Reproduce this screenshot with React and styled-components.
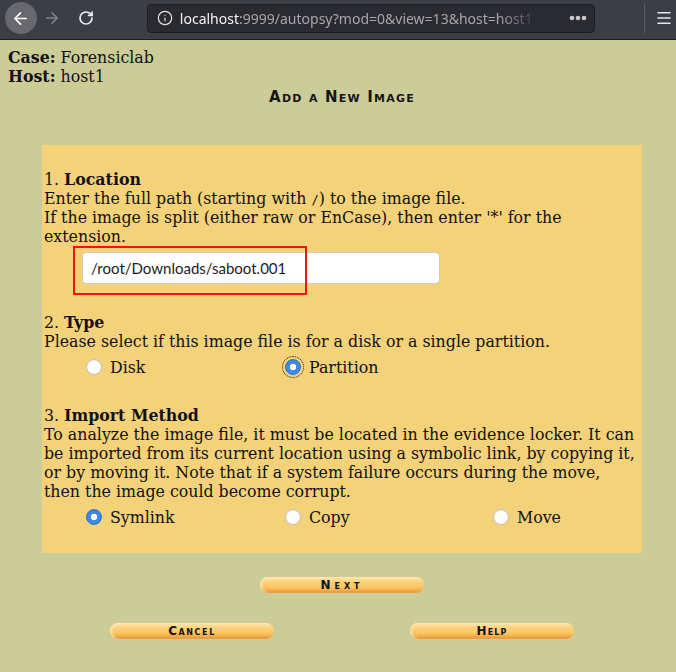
import styled, { createGlobalStyle } from "styled-components";
import { ArrowLeft, ArrowRight, RotateCw, Info, Menu } from "lucide-react";

const GlobalStyle = createGlobalStyle`
  html, body {
    margin: 0;
    padding: 0;
  }
  body {
    background: #cccc99;
    color: #111;
    font-family: "DejaVu Serif", serif;
    font-size: 15.8px;
  }
`;

function Dots() {
  return (
    <svg width="18" height="6" viewBox="0 0 18 6">
      <circle cx="3" cy="3" r="2.3" fill="#c9c9cc" />
      <circle cx="9" cy="3" r="2.3" fill="#c9c9cc" />
      <circle cx="15" cy="3" r="2.3" fill="#c9c9cc" />
    </svg>
  );
}

function App() {
  return (
    <>
      <GlobalStyle />
      <Toolbar>
        <BackButton>
          <ArrowLeft size={19} strokeWidth={2.2} color="#fff" />
        </BackButton>
        <NavButton>
          <ArrowRight size={18} strokeWidth={2} color="#85868b" />
        </NavButton>
        <NavButton $gap={10}>
          <RotateCw size={16} strokeWidth={2.6} color="#ececee" />
        </NavButton>
        <UrlBar>
          <Info size={16} strokeWidth={1.8} color="#e4e4e6" />
          <UrlText>
            <Host>localhost</Host>:9999/autopsy?mod=0&view=13&host=host1
          </UrlText>
          <Dots />
        </UrlBar>
        <Separator />
        <MenuButton>
          <Menu size={18} strokeWidth={2.2} color="#e4e4e6" />
        </MenuButton>
      </Toolbar>

      <Page>
        <Meta>
          <b>Case:</b> Forensiclab
        </Meta>
        <Meta>
          <b>Host:</b> host1
        </Meta>
        <Title>Add a New Image</Title>

        <Panel>
          <Block>
            1. <b>Location</b>
            <br />
            Enter the full path (starting with <Mono>/</Mono>) to the image
            file.
            <br />
            If the image is split (either raw or EnCase), then enter '*' for
            the extension.
          </Block>
          <InputRow>
            <PathInput defaultValue="/root/Downloads/saboot.001" />
            <Highlight />
          </InputRow>

          <Block $gap={29}>
            2. <b>Type</b>
            <br />
            Please select if this image file is for a disk or a single
            partition.
          </Block>
          <RadioRow>
            <Choice>
              <Radio type="radio" name="type" />
              Disk
            </Choice>
            <Choice>
              <Radio type="radio" name="type" defaultChecked $focused />
              Partition
            </Choice>
          </RadioRow>

          <Block $gap={29}>
            3. <b>Import Method</b>
            <br />
            To analyze the image file, it must be located in the evidence
            locker. It can be imported from its current location using a
            symbolic link, by copying it, or by moving it. Note that if a
            system failure occurs during the move, then the image could become
            corrupt.
          </Block>
          <RadioRow>
            <Choice>
              <Radio type="radio" name="method" defaultChecked />
              Symlink
            </Choice>
            <Choice>
              <Radio type="radio" name="method" />
              Copy
            </Choice>
            <Choice>
              <Radio type="radio" name="method" />
              Move
            </Choice>
          </RadioRow>
        </Panel>

        <ButtonRow $gap={24} $cols="1fr">
          <PillButton $spacing={4}>Next</PillButton>
        </ButtonRow>
        <ButtonRow $gap={30} $cols="1fr 1fr">
          <PillButton>Cancel</PillButton>
          <PillButton $spacing={1.1}>Help</PillButton>
        </ButtonRow>
      </Page>
    </>
  );
}

export default App;

const Toolbar = styled.header`
  display: flex;
  align-items: center;
  height: 36px;
  padding-bottom: 3px;
  background: #3b3e45;
  border-bottom: 1px solid #1c1d21;
`;

const BackButton = styled.div`
  display: flex;
  justify-content: center;
  align-items: center;
  width: 32px;
  height: 32px;
  margin-left: 5px;
  border-radius: 50%;
  background: #68696e;
`;

const NavButton = styled.div`
  display: flex;
  justify-content: center;
  align-items: center;
  width: 24px;
  height: 24px;
  margin-left: ${(p) => p.$gap || 3}px;
`;

const UrlBar = styled.div`
  display: flex;
  align-items: center;
  box-sizing: border-box;
  width: 449px;
  height: 29px;
  margin-left: 49px;
  padding: 0 7px 0 9px;
  border: 1px solid #1d1e22;
  border-radius: 4px;
  background: #2a2b31;
`;

const UrlText = styled.div`
  flex: 1;
  margin: 0 28px 0 7px;
  overflow: hidden;
  white-space: nowrap;
  font-family: "Noto Sans", sans-serif;
  font-size: 14px;
  color: #a6a7ac;
  -webkit-mask-image: linear-gradient(to right, #000 88%, transparent);
  mask-image: linear-gradient(to right, #000 88%, transparent);
`;

const Host = styled.span`
  color: #f4f4f5;
`;

const Separator = styled.div`
  width: 1px;
  height: 30px;
  margin-left: 49px;
  background: #5a5c62;
`;

const MenuButton = styled.div`
  display: flex;
  justify-content: center;
  align-items: center;
  width: 24px;
  height: 24px;
  margin-left: 7px;
`;

const Page = styled.main`
  padding: 8px;
`;

const Meta = styled.div`
  line-height: 19px;
`;

const Title = styled.h1`
  width: 600px;
  margin: 1px 0 0 34px;
  font-family: "DejaVu Sans", sans-serif;
  font-size: 15px;
  font-weight: bold;
  font-variant: small-caps;
  letter-spacing: 1.2px;
  line-height: 20px;
  text-align: center;
  color: #151515;
`;

const Panel = styled.section`
  box-sizing: border-box;
  width: 600px;
  margin: 38px 0 0 34px;
  padding: 25px 2px 26px;
  background: #f3d27a;
  line-height: 19px;
`;

const Block = styled.div`
  margin-top: ${(p) => p.$gap || 0}px;
`;

const Mono = styled.span`
  font-family: "DejaVu Sans Mono", monospace;
  font-size: 12px;
  line-height: 0;
`;

const InputRow = styled.div`
  position: relative;
  width: 358px;
  margin: 6px 0 0 38px;
`;

const PathInput = styled.input`
  box-sizing: border-box;
  display: block;
  width: 358px;
  height: 32px;
  padding: 0 8px;
  border: 1px solid #cfcac0;
  border-radius: 4px;
  background: #fff;
  font-family: Lato, "Noto Sans", sans-serif;
  font-size: 15px;
  color: #1c1c1c;
  outline: none;
`;

const Highlight = styled.div`
  position: absolute;
  left: -9px;
  top: -6px;
  width: 234px;
  height: 49px;
  box-sizing: border-box;
  border: 2px solid #f01414;
  pointer-events: none;
`;

const RadioRow = styled.div`
  display: grid;
  grid-template-columns: 199px 208px 1fr;
  align-items: center;
  height: 20px;
  margin-top: 6px;
  padding-left: 42px;
`;

const Choice = styled.label`
  display: flex;
  align-items: center;
  gap: 8px;
`;

const Radio = styled.input`
  appearance: none;
  box-sizing: border-box;
  width: 16px;
  height: 16px;
  margin: 0;
  border-radius: 50%;
  border: 1px solid #c4beb4;
  background: #fff;
  box-shadow: inset 0 1px 1px rgba(0, 0, 0, 0.06);
  outline: ${(p) => (p.$focused ? "1px dotted #222" : "none")};
  outline-offset: 2px;

  &:checked {
    border-color: #2f72c9;
    background: radial-gradient(circle, #fff 0 3px, #3f88e3 3.5px);
  }
`;

const ButtonRow = styled.div`
  display: grid;
  grid-template-columns: ${(p) => p.$cols};
  justify-items: center;
  width: 600px;
  margin: ${(p) => p.$gap}px 0 0 34px;
`;

const PillButton = styled.button`
  width: 164px;
  height: 16px;
  padding: 0;
  border: none;
  border-radius: 8px;
  background: linear-gradient(
    #ffe9b0 0%,
    #fdd27c 30%,
    #fbc765 62%,
    #f3aa47 84%,
    #e48a2c 100%
  );
  box-shadow: inset 2px 0 2px rgba(255, 240, 200, 0.6);
  font-family: "DejaVu Sans", sans-serif;
  font-size: 12px;
  font-weight: bold;
  font-variant: small-caps;
  letter-spacing: ${(p) => p.$spacing ?? 1.6}px;
  line-height: 16px;
  color: #111;
`;
